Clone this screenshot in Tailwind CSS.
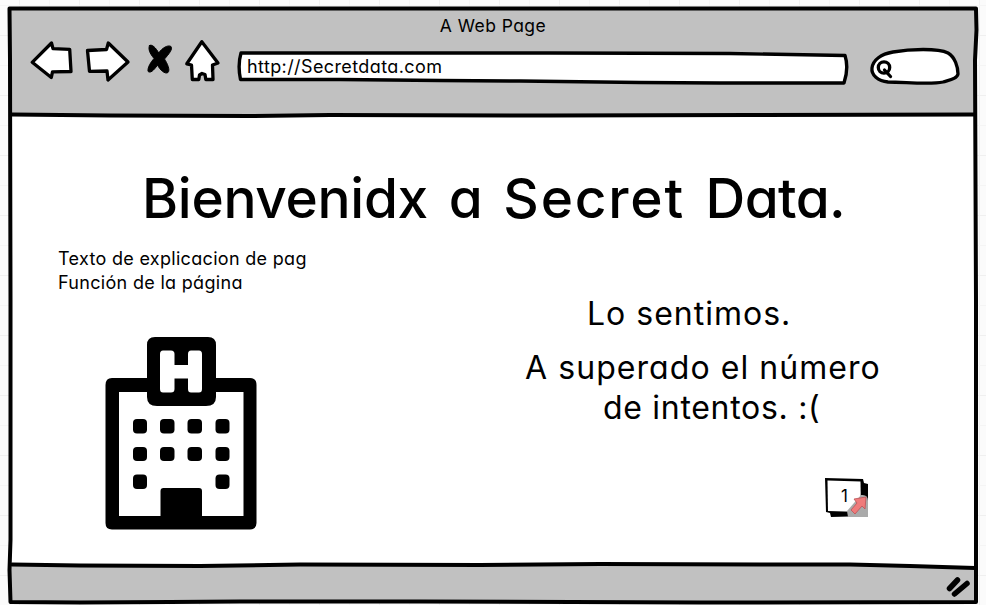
<!DOCTYPE html>
<html lang="es">
<head>
<meta charset="utf-8">
<title>A Web Page</title>
<script src="https://cdn.jsdelivr.net/npm/@tailwindcss/browser@4"></script>
</head>
<body class="relative w-[986px] h-[605px] overflow-hidden bg-[#fbfbfb] text-black font-[Inter,sans-serif] [font-feature-settings:'cv11','ss03']">
<!-- hand-drawn window frame -->
<svg class="absolute inset-0" width="986" height="605" viewBox="0 0 986 605" fill="none">
  <defs><pattern id="grid" x="19" y="5" width="60" height="60" patternUnits="userSpaceOnUse"><path d="M.5 0V60M0 30.500H60" stroke="#f0f0f0"/><path d="M30.500 0V60M0 .5H60" stroke="#f5f5f5"/></pattern></defs>
  <rect width="986" height="605" fill="url(#grid)"/>
  <path d="M10 8H976V603H10Z" fill="#fff"/>
  <path d="M10 8H976V115H10Z" fill="#c1c1c1"/>
  <path d="M11 564.500L150 565.500L330 564L560 564.500L830 564L975 568V602H11Z" fill="#c1c1c1"/>
  <g stroke="#000" stroke-width="4" stroke-linejoin="round" stroke-linecap="round">
    <path d="M9.500 8.500H976L976.500 30L975 60L976 300V602L700 602.500L420 601.500L240 601.500L170 602L80 602.500L10.500 602L9.500 570L10.500 540V300L10 60Z"/>
    <path d="M12 114.500L110 115.500L250 116L330 115L550 115.500L750 115L975 114.500"/>
    <path d="M12 564.500L80 565.500L200 566L300 564.500L480 565L600 564L760 564.500L850 564.500L910 566L975 568"/>
  </g>
</svg>
<div class="relative flex flex-col w-[986px] h-[605px]">
  <header class="h-[115px] pt-[10px] shrink-0">
    <div class="h-[32px] leading-[32px] text-center text-[17.5px] tracking-[.45px] whitespace-nowrap">A Web Page</div>
    <div class="flex h-[50px] pl-[28px]">
      <svg class="overflow-visible" width="200" height="50" viewBox="28 42 200 50" stroke="#000" stroke-width="3.300" stroke-linejoin="round" stroke-linecap="round" fill="#fff">
        <path d="M32.200 62.300L51.500 43L53 48.700L69.700 49.300L71 71.500L52.500 71.800L51.300 77.500Z"/>
        <path d="M87.500 50.500L106.500 49.500L108.300 43L128 62L108 80L107 71L89.500 71.300Z"/>
        <path d="M186.800 63.800L201.800 41.700L218 63L212.500 65L213 79.500H205.800L205 74.500L202 73.500L199.500 75L198.800 79.500H192.300L191.500 65Z"/>
        <path stroke-width="1" fill="#000" d="M149.500 45.500C152 43.700 156 48 158.700 53C162 48 168 44.500 171 46.500C173 49 169 54 164.500 59C167 63 170.500 70 168 72.500C165 74.500 160 70 157.500 65C153.500 71 150 73.500 148 71.300C147.500 67 151 62 154 58.500C149.500 53 148 49 149.500 45.500Z"/>
      </svg>
      <div class="relative w-[624px] h-[50px]">
        <svg class="absolute inset-0" width="624" height="50" viewBox="228 42 624 50" stroke="#000" stroke-width="3.400" stroke-linejoin="round" fill="#fff"><path d="M241 53L550 53L730 53.500L845 55.500Q849 68 844 83L720 83L640 82.500L520 81L440 80.500L340 79.500L240.500 79.500Q237.500 65 241 53Z"/></svg>
        <span class="relative block pl-[19px] pt-[13px] leading-[24px] text-[18px] tracking-[.4px] whitespace-nowrap">http://Secretdata.com</span>
      </div>
      <svg width="120" height="50" viewBox="852 42 120 50" stroke="#000" stroke-width="3.300" fill="#fff" stroke-linecap="round"><path d="M888 82C878 81 871 75 872 68C873 60 881 54 893 52C910 49 938 48 948 53C955 57 958 67 958 74C957 79 949 80 943 82C930 85 905 82 888 82Z"/><circle cx="884" cy="67.500" r="5.700"/><path d="M884.500 70L890.500 76.500"/></svg>
    </div>
  </header>
  <main class="flex flex-col h-[450px]">
    <h1 class="mt-[47px] pl-[142px] h-[72px] leading-[72px] text-[55px] font-medium [word-spacing:6px] whitespace-nowrap"><span class="tracking-[-.3px]">Bienvenidx</span> a <span class="tracking-[1.8px]">Secret</span> <span class="tracking-[-.6px]">Data.</span></h1>
    <div class="flex pt-[12px]">
      <section class="w-[458px] pt-px pl-[58px]">
        <p class="leading-[24px] text-[18px] tracking-[.31px] whitespace-nowrap">Texto de explicacion de pag<br>Función de la página</p>
        <svg class="mt-[41px] ml-[47px]" width="152" height="194" viewBox="105 336 152 194">
          <path fill-rule="evenodd" d="M111 378H147V345Q147 337 155 337H208Q216 337 216 345V378H250Q256.500 378 256.500 385V523Q256.500 529.500 250 529.500H112Q105.500 529.500 105.500 523V385Q105.500 378 112 378ZM119 392V516H160.500V491Q160.500 488 163.500 488H199Q202 488 202 491V516H243.500V392H216V397Q216 406 206 406H157Q147 406 147 397V392ZM163 350.500Q160 350.500 160 354V389Q160 392.500 163 392.500H171Q174.500 392.500 174.500 389V378.500H188V389Q188 392.500 191 392.500H199Q202 392.500 202 389V354Q202 350.500 199 350.500H191Q188 350.500 188 354V365H174.500V354Q174.500 350.500 171 350.500Z"/>
          <g><rect x="133" y="419" width="14" height="14.500" rx="4"/><rect x="160" y="419" width="14.500" height="14.500" rx="4"/><rect x="187.500" y="419" width="14.500" height="14.500" rx="4"/><rect x="215.500" y="419" width="14" height="14.500" rx="4"/><rect x="133" y="447" width="14" height="14" rx="4"/><rect x="160" y="447" width="14.500" height="14" rx="4"/><rect x="187.500" y="447" width="14.500" height="14" rx="4"/><rect x="215.500" y="447" width="14" height="14" rx="4"/><rect x="133" y="474.500" width="14" height="14.500" rx="4"/><rect x="215.500" y="474.500" width="14" height="14.500" rx="4"/></g>
        </svg>
      </section>
      <section class="pt-[48px] text-[32px] leading-[40px] tracking-[.7px] whitespace-nowrap">
        <p class="pl-[129px] tracking-[1px]">Lo sentimos.</p>
        <p class="pt-[14px] pl-[67px] tracking-[1.060px]">A superado el número</p>
        <p class="pl-[145px]">de intentos. :(</p>
        <div class="relative mt-[48px] ml-[365px] w-[47px] h-[42px]">
          <svg class="absolute inset-0" width="47" height="42" viewBox="823 477 47 42"><path d="M825 479L863 480L864 484L868 485V517L831 518L830 514L826 513Z"/><path d="M827.500 481.500L860.500 482.500L861 513L828 512Z" fill="#fff"/><path d="M861 496Q868 495 868 502V518H848L847 512Z" fill="#aaa"/><path d="M854 500L866 498L865 510L862 507L855 515L851 511L857 504Z" fill="#ef7b7b" stroke="#bd5257" stroke-width=".8"/></svg>
          <span class="relative block pl-[18px] pt-[8px] text-[17px] leading-[24px]">1</span>
        </div>
      </section>
    </div>
  </main>
  <footer class="flex justify-end h-[40px] pt-[10px] pr-[15px]">
    <svg width="26" height="24" viewBox="945 575 26 24" stroke="#000" stroke-width="5.500" stroke-linecap="round"><path d="M949.500 588.500L957.500 580M954.500 594L967 583.500"/></svg>
  </footer>
</div>
</body>
</html>
